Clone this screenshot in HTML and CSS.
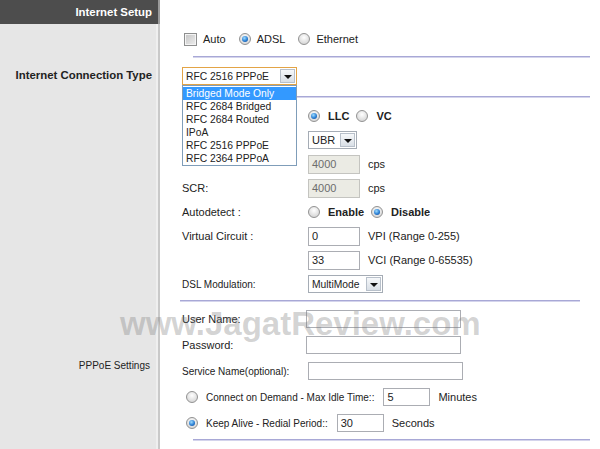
FILE: index.html
```html
<!DOCTYPE html>
<html>
<head>
<meta charset="utf-8">
<title>Internet Setup</title>
<link rel="stylesheet" href="styles.css">
</head>
<body>
<div class="setup">
  <div class="side side-head">Internet Setup</div>
  <div class="main main-head"></div>

  <div class="side"></div>
  <div class="main sec-mode">
    <div class="opts">
      <label class="opt"><span class="check"></span>Auto</label>
      <label class="opt"><span class="radio on"></span>ADSL</label>
      <label class="opt"><span class="radio"></span>Ethernet</label>
    </div>
    <div class="rule rule-mode"></div>
  </div>

  <div class="side"><div class="side-label side-label-conn">Internet Connection Type</div></div>
  <div class="main sec-atm">
    <div class="conn">
      <div class="select select-focus select-conn"><span class="select-text">RFC 2516 PPPoE</span><span class="select-btn"><span class="tri"></span></span></div>
      <ul class="droplist">
        <li class="sel">Bridged Mode Only</li>
        <li>RFC 2684 Bridged</li>
        <li>RFC 2684 Routed</li>
        <li>IPoA</li>
        <li>RFC 2516 PPPoE</li>
        <li>RFC 2364 PPPoA</li>
      </ul>
    </div>
    <div class="rule rule-conn"></div>
    <div class="rows rows-atm">
      <div class="frow"><span class="flabel"></span><span class="fval"><label class="opt opt-b"><span class="radio on"></span>LLC</label><label class="opt opt-b"><span class="radio"></span>VC</label></span></div>
      <div class="frow"><span class="flabel"></span><span class="fval"><span class="select select-ubr"><span class="select-text">UBR</span><span class="select-btn"><span class="tri"></span></span></span></span></div>
      <div class="frow"><span class="flabel"></span><span class="fval"><span class="input input-dis">4000</span><span class="unit">cps</span></span></div>
      <div class="frow"><span class="flabel">SCR:</span><span class="fval"><span class="input input-dis">4000</span><span class="unit">cps</span></span></div>
      <div class="frow"><span class="flabel">Autodetect :</span><span class="fval"><label class="opt opt-b"><span class="radio"></span>Enable</label><label class="opt opt-b"><span class="radio on"></span>Disable</label></span></div>
      <div class="frow"><span class="flabel">Virtual Circuit :</span><span class="fval"><span class="input">0</span><span class="unit">VPI (Range 0-255)</span></span></div>
      <div class="frow"><span class="flabel"></span><span class="fval"><span class="input">33</span><span class="unit">VCI (Range 0-65535)</span></span></div>
      <div class="frow"><span class="flabel flabel-dsl">DSL Modulation:</span><span class="fval"><span class="select select-mod"><span class="select-text">MultiMode</span><span class="select-btn"><span class="tri"></span></span></span></span></div>
    </div>
    <div class="rule rule-atm"></div>
  </div>

  <div class="side"><div class="side-label side-label-pppoe">PPPoE Settings</div></div>
  <div class="main sec-pppoe">
    <div class="rows rows-pppoe">
      <div class="frow"><span class="flabel flabel-p">User Name:</span><span class="input input-wide"></span></div>
      <div class="frow"><span class="flabel flabel-p">Password:</span><span class="input input-wide"></span></div>
      <div class="frow"><span class="flabel flabel-p flabel-svc">Service Name(optional):</span><span class="input input-wide input-svc"></span></div>
      <div class="frow frow-opt"><span class="radio"></span><span class="opt-text opt-text-demand">Connect on Demand - Max Idle Time::</span><span class="input input-small">5</span><span class="unit">Minutes</span></div>
      <div class="frow frow-opt"><span class="radio on"></span><span class="opt-text opt-text-alive">Keep Alive - Redial Period::</span><span class="input input-small">30</span><span class="unit">Seconds</span></div>
    </div>
    <div class="rule rule-pppoe"></div>
  </div>

  <div class="side side-fill"></div>
  <div class="main"></div>
</div>
<div class="watermark">www.JagatReview.com</div>
</body>
</html>
```

FILE: styles.css
```css
html, body {
  margin: 0;
  padding: 0;
  background: #fff;
}
body {
  width: 600px;
  height: 449px;
  overflow: hidden;
  position: relative;
  font-family: "Liberation Sans", Arial, sans-serif;
  font-size: 11px;
  color: #222;
}
.setup {
  display: grid;
  grid-template-columns: 160px 440px;
  grid-template-rows: 24px auto auto auto 1fr;
  height: 449px;
}
.side {
  background: #e6e6e6;
  box-shadow: inset -2px 0 0 #c9c9c9, inset -4px 0 0 #efefef;
}
.side-head {
  background: #4d4d4d;
  box-shadow: inset -2px 0 0 #9a9a9a;
  color: #fff;
  font-weight: bold;
  font-size: 11.4px;
  text-align: right;
  padding-right: 8px;
  line-height: 24px;
}
.side-label {
  text-align: right;
  line-height: 14px;
}
.side-label-conn {
  font-weight: bold;
  font-size: 11.4px;
  padding-top: 10px;
  padding-right: 8px;
}
.side-label-pppoe {
  font-size: 10px;
  padding-top: 57px;
  padding-right: 10px;
}
.main {
  background: #fff;
}

/* section 1 */
.sec-mode {
  padding: 6px 0 0 24px;
}
.opts {
  display: flex;
  align-items: center;
  height: 18px;
}
.opt {
  display: inline-flex;
  align-items: center;
  gap: 6px;
  margin-right: 13px;
}
.opt-b {
  font-weight: bold;
  gap: 8px;
  margin-right: 7px;
}
.rule {
  height: 0;
  border-top: 1px solid #a8a8d6;
  border-bottom: 1px solid #d4d4ec;
}
.rule-mode {
  margin: 8px 10px 0 9px;
}

/* controls */
.check {
  width: 13px;
  height: 13px;
  box-sizing: border-box;
  border: 1px solid #8e8f8f;
  background: linear-gradient(135deg, #c4c4c4, #eeeeee);
  box-shadow: inset 0 0 0 1px #f4f4f4;
}
.radio {
  width: 12px;
  height: 12px;
  box-sizing: border-box;
  border-radius: 50%;
  border: 1px solid #929292;
  background: radial-gradient(circle at 50% 35%, #ffffff, #d6d6d6 80%);
  display: inline-flex;
  align-items: center;
  justify-content: center;
  flex: none;
}
.radio.on::after {
  content: "";
  width: 6px;
  height: 6px;
  border-radius: 50%;
  background: radial-gradient(circle at 40% 35%, #9fdcff, #2a7fd4 55%, #0f3f86);
}
.select {
  display: inline-flex;
  align-items: center;
  height: 18px;
  box-sizing: border-box;
  border: 1px solid #a5acb5;
  background: #fff;
  padding-left: 3px;
  font-size: 10.3px;
}
.select-focus {
  border-color: #e3a446;
}
.select-text {
  flex: 1;
  white-space: nowrap;
}
.select-btn {
  width: 15px;
  height: 14px;
  box-sizing: border-box;
  margin-right: 1px;
  border: 1px solid #b8c0ca;
  background: linear-gradient(#f6f8fa, #d9dfe6);
  display: flex;
  align-items: center;
  justify-content: center;
}
.tri {
  width: 0;
  height: 0;
  border-left: 4px solid transparent;
  border-right: 4px solid transparent;
  border-top: 4px solid #111;
  margin-top: 1px;
}

/* section 2 */
.sec-atm {
  padding: 9px 0 0 22px;
}
.conn {
  position: relative;
  width: 115px;
}
.select-conn {
  width: 115px;
}
.droplist {
  position: absolute;
  z-index: 2;
  left: 0;
  top: 18px;
  width: 115px;
  box-sizing: border-box;
  margin: 0;
  padding: 1px 0 0;
  list-style: none;
  background: #fff;
  border: 1px solid #7f9db9;
  font-size: 10.3px;
}
.droplist li {
  height: 13px;
  line-height: 13px;
  padding-left: 3px;
  white-space: nowrap;
}
.droplist li.sel {
  background: #3399ff;
  color: #fff;
}
.rule-conn {
  margin: 11px 10px 0 11px;
}
.rows {
  display: flex;
  flex-direction: column;
}
.rows-atm {
  margin-top: 8px;
  gap: 4px;
}
.frow {
  display: flex;
  align-items: center;
  height: 20px;
}
.flabel {
  width: 126px;
  flex: none;
  white-space: nowrap;
}
.flabel-dsl {
  font-size: 10px;
}
.fval {
  display: flex;
  align-items: center;
}
.input {
  display: inline-flex;
  align-items: center;
  width: 52px;
  height: 19px;
  box-sizing: border-box;
  border: 1px solid #abadb3;
  background: #fff;
  padding-left: 3px;
  color: #222;
}
.input-dis {
  background: #ebebe4;
  border-color: #c4c4c0;
  color: #6d6d6d;
}
.unit {
  margin-left: 8px;
}
.select-ubr {
  width: 49px;
  font-size: 11px;
}
.select-mod {
  width: 75px;
}
.rule-atm {
  margin: 6px 20px 0 -2px;
}

/* section 3 */
.sec-pppoe {
  padding: 7px 0 0 22px;
}
.rows-pppoe {
  gap: 6px;
}
.flabel-p {
  width: 124px;
}
.flabel-svc {
  font-size: 10px;
}
.input-wide {
  width: 155px;
  height: 18px;
}
.input-svc {
  margin-left: 2px;
}
.frow-opt {
  padding-left: 4px;
}
.opt-text {
  margin-left: 8px;
  margin-right: 9px;
  white-space: nowrap;
}
.opt-text-demand {
  font-size: 10px;
}
.opt-text-alive {
  font-size: 10px;
}
.input-small {
  width: 47px;
  height: 18px;
}
.rule-pppoe {
  margin: 6px 10px 0 11px;
}

.watermark {
  position: absolute;
  left: 120px;
  top: 305px;
  font-size: 33px;
  font-weight: bold;
  color: rgba(120, 120, 120, 0.33);
  pointer-events: none;
  white-space: nowrap;
  z-index: 5;
}
```
